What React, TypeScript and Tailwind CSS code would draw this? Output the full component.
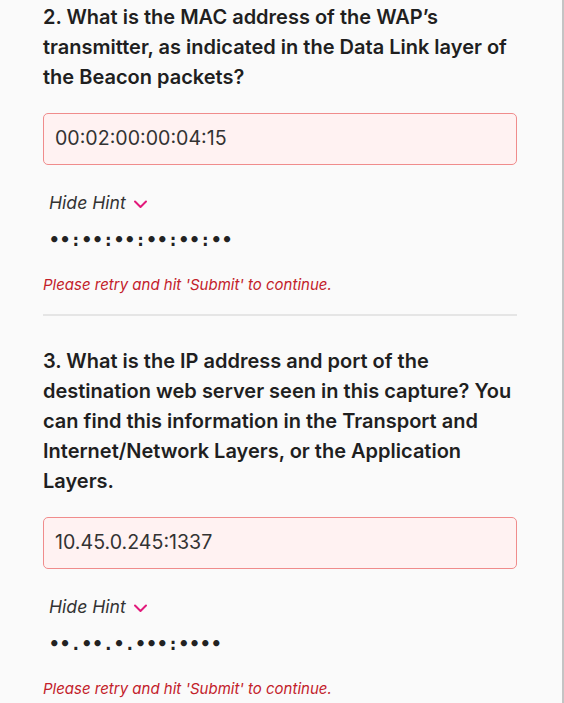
import React from "react";

function Chevron() {
  return (
    <svg width="15" height="10" viewBox="0 0 15 10" fill="none" stroke="#e2197b" strokeWidth="2" strokeLinecap="round" strokeLinejoin="round" className="ml-[7px] mt-[2px]">
      <path d="M2 2.5l5.5 5.5 5.5-5.5" />
    </svg>
  );
}

function Question({ title, value, hint }: { title: string; value: string; hint: string }) {
  return (
    <div className="flex flex-col">
      <h2 className="text-[20px] leading-[30px] font-semibold text-[#1f1f1f]">{title}</h2>
      <div className="mt-[21px] h-[52px] rounded-[5px] border border-[#f08c8c] bg-[#fff2f2] flex items-center px-[11px] text-[19.6px] text-[#333]">
        {value}
      </div>
      <div className="mt-[26px] ml-[6px] flex items-center h-[24px] text-[17.6px] italic text-[#333]">
        Hide Hint
        <Chevron />
      </div>
      <div className="mt-[13px] ml-[6px] h-[24px] flex items-center text-[17.6px] tracking-[0.2px] font-bold text-[#222] font-['DejaVu_Sans_Mono',monospace]">
        {hint}
      </div>
      <div className="mt-[23px] h-[20px] flex items-center text-[15px] italic text-[#c3212a]">
        Please retry and hit 'Submit' to continue.
      </div>
    </div>
  );
}

export default function App() {
  return (
    <div className="w-[564px] h-[703px] overflow-hidden bg-[#fafafa] border-r-2 border-[#c4c4c4] font-['Inter',sans-serif]">
      <div className="ml-[43px] w-[474px] pt-[2px]">
        <Question
          title="2. What is the MAC address of the WAP’s transmitter, as indicated in the Data Link layer of the Beacon packets?"
          value="00:02:00:00:04:15"
          hint="••:••:••:••:••:••"
        />
        <div className="mt-[19px] h-[2px] bg-[#e5e5e5]" />
        <div className="mt-[30px]">
          <Question
            title="3. What is the IP address and port of the destination web server seen in this capture? You can find this information in the Transport and Internet/Network Layers, or the Application Layers."
            value="10.45.0.245:1337"
            hint="••.••.•.•••:••••"
          />
        </div>
      </div>
    </div>
  );
}
